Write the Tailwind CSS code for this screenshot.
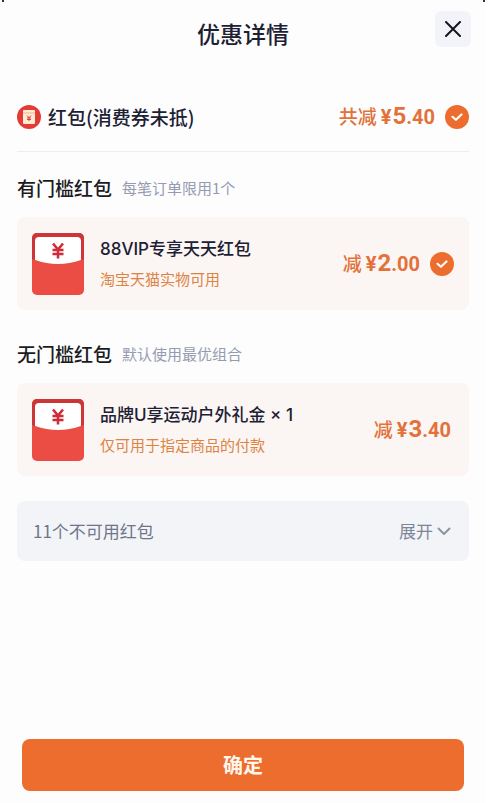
<!DOCTYPE html>
<html lang="zh-CN">
<head>
<meta charset="utf-8">
<meta name="viewport" content="width=device-width, initial-scale=1">
<title>优惠详情</title>
<script src="https://cdn.jsdelivr.net/npm/@tailwindcss/browser@4"></script>
</head>
<body class="bg-white font-['Noto_Sans_CJK_SC',sans-serif] text-[#1c2033]">
<svg class="hidden">
  <symbol id="packet" viewBox="0 0 52 62">
    <rect width="52" height="62" rx="5" fill="#eb4c43"/>
    <path d="M0 28V5a5 5 0 0 1 5-5h42a5 5 0 0 1 5 5v23z" fill="#cc3637"/>
    <path d="M0 26q26 10 52 0v12H0z" fill="#eb4c43"/>
    <path d="M3 8a4 4 0 0 1 4-4h38a4 4 0 0 1 4 4v19q-23 8-46 0z" fill="#fff"/>
    <path d="M21 10.500l5 6 5-6M20.500 17h11M20.500 21h11M26 16.500v9" fill="none" stroke="#d22b38" stroke-width="2.600"/>
  </symbol>
  <symbol id="tick" viewBox="0 0 24 24">
    <path d="M7.500 11.800l3.400 3 5.600-5.300" fill="none" stroke="#fff" stroke-width="2.200" stroke-linecap="round" stroke-linejoin="round"/>
  </symbol>
</svg>
<main class="relative mr-[15px] flex min-h-screen flex-col bg-[#fdfdfe] pr-4 pl-[17px]">
  <span class="absolute top-0 left-[2px] h-[2px] w-[2px] bg-[#33343a]"></span>
  <span class="absolute top-0 right-0 h-[2px] w-[2px] bg-[#33343a]"></span>

  <header class="relative flex h-[66px] items-center justify-center">
    <h1 class="text-[23px] leading-8 font-medium">优惠详情</h1>
    <button type="button" aria-label="关闭" class="absolute top-[11px] -right-0.5 flex h-9 w-9 items-center justify-center rounded-md bg-[#f3f4f9]">
      <svg class="h-4 w-4" viewBox="0 0 16 16" fill="none" stroke="#15171f" stroke-width="2" stroke-linecap="round"><path d="M1 1l14 14M15 1L1 15"/></svg>
    </button>
  </header>

  <section class="mt-4 flex h-[70px] items-center border-b border-[#ededf0]">
    <svg class="h-6 w-6" viewBox="0 0 24 24">
      <circle cx="12" cy="12" r="12" fill="#e33c37"/>
      <rect x="6" y="5" width="12" height="14" rx="1" fill="#fdecd2"/>
      <path d="M6 8h12" stroke="#efb093" stroke-width="1"/>
      <path d="M10 10.500l2 2.200 2-2.200M10 12.900h4M10 14.500h4M12 12.500v3.500" fill="none" stroke="#d9453a" stroke-width="1"/>
    </svg>
    <label for="all" class="ml-[7px] flex-1 text-[19px] leading-7 font-medium">红包(消费券未抵)</label>
    <p class="flex items-baseline font-medium text-[#e2713a]">
      <span class="text-[19px] leading-7">共减</span>
      <span class="mr-px ml-1 font-[Roboto] text-[20px] leading-7 font-bold">¥</span>
      <span class="font-[Roboto] text-[24px] leading-7 font-bold">5</span>
      <span class="font-[Roboto] text-[20px] leading-7 font-bold">.40</span>
    </p>
    <span class="relative ml-[10px] h-6 w-6">
      <input id="all" type="checkbox" checked class="block h-6 w-6 appearance-none rounded-full bg-[#ec6d2d]">
      <svg class="pointer-events-none absolute inset-0 h-6 w-6"><use href="#tick"/></svg>
    </span>
  </section>

  <section class="mt-[22px]">
    <div class="flex items-center gap-[10px]">
      <h2 class="text-[19px] leading-7 font-medium text-[#1b1b1f]">有门槛红包</h2>
      <p class="text-[15px] leading-6 text-[#959bb0]">每笔订单限用1个</p>
    </div>
    <div class="mt-[15px] flex h-[93px] items-center rounded-lg bg-[#fbf5f3] px-[15px]">
      <svg class="h-[62px] w-[52px]"><use href="#packet"/></svg>
      <label for="vip" class="ml-4 flex-1 pb-0.5">
        <span class="block font-[Inter,'Noto_Sans_CJK_SC',sans-serif] text-[17px] leading-7 font-medium">88VIP专享天天红包</span>
        <span class="mt-1 block text-[15px] leading-6 text-[#dd8444]">淘宝天猫实物可用</span>
      </label>
      <p class="flex items-baseline font-medium text-[#e2713a]">
        <span class="text-[19px] leading-7">减</span>
        <span class="mr-px ml-1 font-[Roboto] text-[20px] leading-7 font-bold">¥</span>
        <span class="font-[Roboto] text-[24px] leading-7 font-bold">2</span>
        <span class="font-[Roboto] text-[20px] leading-7 font-bold">.00</span>
      </p>
      <span class="relative ml-[10px] h-6 w-6">
        <input id="vip" type="checkbox" checked class="block h-6 w-6 appearance-none rounded-full bg-[#ec6d2d]">
        <svg class="pointer-events-none absolute inset-0 h-6 w-6"><use href="#tick"/></svg>
      </span>
    </div>
  </section>

  <section class="mt-[30px]">
    <div class="flex items-center gap-[10px]">
      <h2 class="text-[19px] leading-7 font-medium text-[#1b1b1f]">无门槛红包</h2>
      <p class="text-[15px] leading-6 text-[#959bb0]">默认使用最优组合</p>
    </div>
    <div class="mt-[15px] flex h-[93px] items-center rounded-lg bg-[#fbf5f3] pr-[18px] pl-[15px]">
      <svg class="h-[62px] w-[52px]"><use href="#packet"/></svg>
      <div class="ml-4 flex-1 pb-0.5">
        <h3 class="font-[Inter,'Noto_Sans_CJK_SC',sans-serif] text-[17px] leading-7 font-medium">品牌U享运动户外礼金 × 1</h3>
        <p class="mt-1 text-[15px] leading-6 text-[#dd8444]">仅可用于指定商品的付款</p>
      </div>
      <p class="flex items-baseline font-medium text-[#e2713a]">
        <span class="text-[19px] leading-7">减</span>
        <span class="mr-px ml-1 font-[Roboto] text-[20px] leading-7 font-bold">¥</span>
        <span class="font-[Roboto] text-[24px] leading-7 font-bold">3</span>
        <span class="font-[Roboto] text-[20px] leading-7 font-bold">.40</span>
      </p>
    </div>
  </section>

  <button type="button" aria-expanded="false" class="mt-[25px] flex h-[60px] items-center justify-between rounded-lg bg-[#f2f4f8] pr-[18px] pl-4 text-[17px] leading-6">
    <span class="text-[#70758a]">11个不可用红包</span>
    <span class="flex items-center gap-1 text-[#7f8598]">展开
      <svg class="h-3 w-[14px]" viewBox="0 0 14 12" fill="none" stroke="#8d93a4" stroke-width="2" stroke-linecap="round" stroke-linejoin="round"><path d="M1.500 3.500L7 9l5.500-5.500"/></svg>
    </span>
  </button>

  <footer class="mt-auto px-[5px] pb-3">
    <button type="button" class="h-[52px] w-full rounded-lg bg-[#ec6d2d] text-[20px] leading-7 font-bold text-[#fff6ec]">确定</button>
  </footer>
</main>
</body>
</html>
